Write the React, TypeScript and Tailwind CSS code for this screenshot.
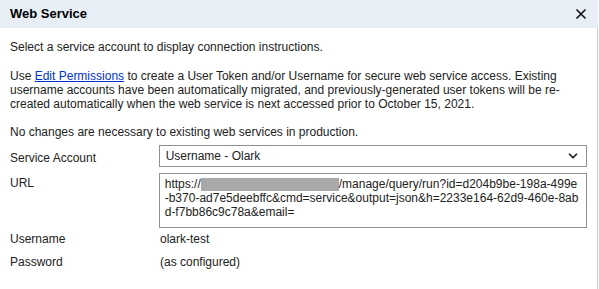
import { ChevronDown } from 'lucide-react';

export default function App() {
  return (
    <div className="w-[599px] h-[289px] bg-white text-[12px] text-[#222] overflow-hidden" style={{ fontFamily: '"Liberation Sans", Arial, sans-serif' }}>
      {/* Header */}
      <div className="h-[28px] w-[598px] bg-[#e8eef6] flex items-center justify-between pl-[10px] pr-[10px]">
        <span className="font-bold text-[13px] text-black">Web Service</span>
        <svg width="12" height="12" viewBox="0 0 12 12" className="mr-[1px]">
          <path d="M1.5 1.5 L10.5 10.5 M10.5 1.5 L1.5 10.5" stroke="#111" strokeWidth="1.6" />
        </svg>
      </div>

      <div className="w-[598px] h-[261px] border-r border-[#c8c8c8] px-[10px] pt-[12px]">
        <p className="leading-[14px]">Select a service account to display connection instructions.</p>

        <p className="leading-[14px] mt-[15px]">
          Use <a href="#" className="text-[#0033cc] underline">Edit Permissions</a> to create a User Token and/or Username for secure web service access. Existing
          <br />
          username accounts have been automatically migrated, and previously-generated user tokens will be re-
          <br />
          created automatically when the web service is next accessed prior to October 15, 2021.
        </p>

        <p className="leading-[14px] mt-[14px]">No changes are necessary to existing web services in production.</p>

        <div className="mt-[6px] flex">
          <div className="w-[150px] pt-[4px]">Service Account</div>
          <div className="w-[432px] h-[22px] border border-[#8f8f8f] flex items-center justify-between pl-[6px] pr-[6px]">
            <span>Username - Olark</span>
            <ChevronDown className="w-[14px] h-[14px]" strokeWidth={3} />
          </div>
        </div>

        <div className="mt-[6px] flex">
          <div className="w-[150px] pt-[1px]">URL</div>
          <div className="w-[432px] h-[55px] border border-[#8f8f8f] pl-[5px] pt-[3px] leading-[14px]">
            <div className="flex items-center">
              https://<span className="inline-block w-[138px] h-[13px] bg-[#a9a9a9]" />/manage/query/run?id=d204b9be-198a-499e
            </div>
            <div>-b370-ad7e5deebffc&amp;cmd=service&amp;output=json&amp;h=2233e164-62d9-460e-8ab</div>
            <div>d-f7bb86c9c78a&amp;email=</div>
          </div>
        </div>

        <div className="mt-[2px] flex">
          <div className="w-[150px]">Username</div>
          <div>olark-test</div>
        </div>
        <div className="mt-[5px] flex">
          <div className="w-[150px]">Password</div>
          <div>(as configured)</div>
        </div>
      </div>
    </div>
  );
}
